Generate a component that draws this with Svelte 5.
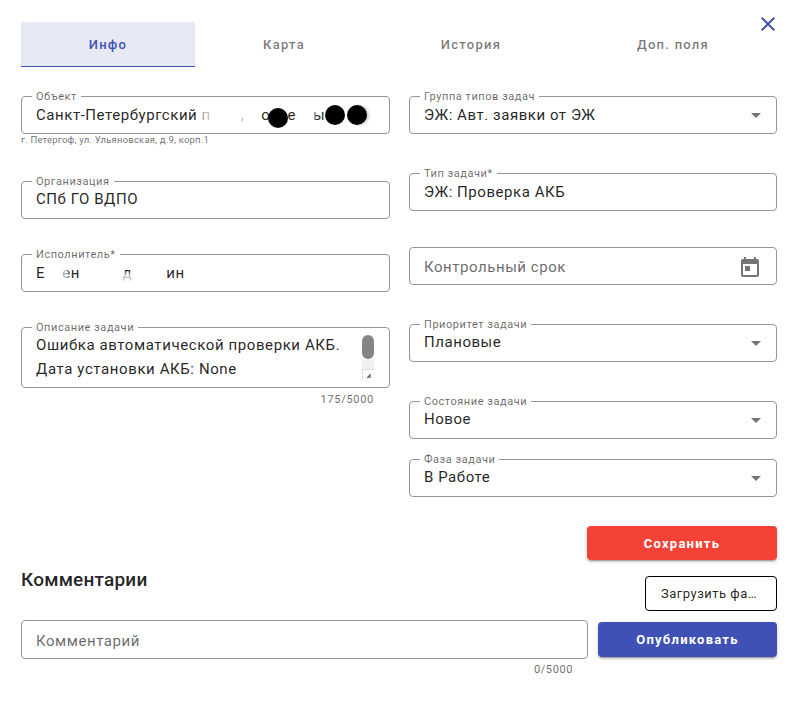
<script>
	const tabs = ['Инфо', 'Карта', 'История', 'Доп. поля'];
	const chevron = 'M7 10l5 5 5-5z';
</script>

{#snippet field(label, value, cls = '', select = false)}
	<div class="field {cls}">
		{#if label}<span class="label">{label}</span>{/if}
		<span class="value">{value}</span>
		{#if select}
			<svg class="chevron" viewBox="0 0 24 24"><path d={chevron} /></svg>
		{/if}
	</div>
{/snippet}

<div class="dialog">
	<button class="close" aria-label="Закрыть">
		<svg viewBox="0 0 24 24"><path d="M19 6.41 17.59 5 12 10.59 6.41 5 5 6.41 10.59 12 5 17.59 6.41 19 12 13.41 17.59 19 19 17.59 13.41 12z" /></svg>
	</button>

	<div class="tabs">
		{#each tabs as tab, i}
			<div class="tab" class:active={i === 0}>{tab}</div>
		{/each}
	</div>

	<div class="columns">
		<div class="col left">
			<div>
				<div class="field low">
					<span class="label">Объект</span>
					<span class="value">Санкт-Петербургский п       ,    о    е    ы</span>
					<i class="smear s1"></i>
					<i class="smear s2"></i>
					<i class="smear s3"></i>
					<i class="dot d1"></i>
					<i class="dot d2"></i>
					<i class="dot d3"></i>
				</div>
				<div class="hint">г. Петергоф, ул. Ульяновская, д.9, корп.1</div>
			</div>
			{@render field('Организация', 'СПб ГО ВДПО')}
			<div class="field low">
				<span class="label">Исполнитель*</span>
				<span class="value">Е    ен          д        ин</span>
				<i class="smear s4"></i>
				<i class="smear s5"></i>
			</div>
			<div>
				<div class="field area">
					<span class="label">Описание задачи</span>
					<div class="area-text">Ошибка автоматической проверки АКБ.<br />Дата установки АКБ: None</div>
					<div class="scroll">
						<div class="thumb"></div>
						<div class="track"></div>
						<div class="resizer">
							<svg viewBox="0 0 10 10"><path d="M7 4 4 7M7 6 6 7" /></svg>
						</div>
					</div>
				</div>
				<div class="count">175/5000</div>
			</div>
		</div>

		<div class="col right">
			{@render field('Группа типов задач', 'ЭЖ: Авт. заявки от ЭЖ', 'low gap39', true)}
			{@render field('Тип задачи*', 'ЭЖ: Проверка АКБ', 'low gap36')}
			<div class="field gap39">
				<span class="value placeholder">Контрольный срок</span>
				<svg class="today" viewBox="0 0 24 24"><path d="M19 3h-1V1h-2v2H8V1H6v2H5c-1.1 0-2 .9-2 2v14c0 1.1.9 2 2 2h14c1.1 0 2-.9 2-2V5c0-1.1-.9-2-2-2zm0 16H5V8h14v11zM7 10h5v5H7z" /></svg>
			</div>
			{@render field('Приоритет задачи', 'Плановые', 'gap39', true)}
			{@render field('Состояние задачи', 'Новое', 'gap20', true)}
			{@render field('Фаза задачи', 'В Работе', '', true)}
			<button class="btn save">Сохранить</button>
		</div>
	</div>

	<div class="comments-head">
		<h2>Комментарии</h2>
		<button class="upload"><span>Загрузить файл</span></button>
	</div>

	<div class="comment-row">
		<div class="comment-col">
			<div class="field tall"><span class="value placeholder">Комментарий</span></div>
			<div class="count small">0/5000</div>
		</div>
		<button class="btn publish">Опубликовать</button>
	</div>
</div>

<style>
	:global(body) {
		background: #fff;
	}

	.dialog {
		position: relative;
		box-sizing: border-box;
		width: 794px;
		height: 715px;
		padding: 22px 17px 0 21px;
		font-family: Roboto, sans-serif;
		color: rgba(0, 0, 0, 0.87);
	}

	.close {
		position: absolute;
		top: 12px;
		right: 14px;
		width: 24px;
		height: 24px;
		padding: 0;
		border: 0;
		background: none;
	}

	.close svg {
		display: block;
		fill: #3f51b5;
	}

	.tabs {
		display: grid;
		grid-template-columns: 174px 178px 196px 208px;
		height: 45px;
	}

	.tab {
		display: flex;
		align-items: center;
		justify-content: center;
		font-size: 13px;
		font-weight: 500;
		letter-spacing: 1.25px;
		color: rgba(0, 0, 0, 0.54);
	}

	.tab.active {
		background: #e7e9f5;
		color: #3f51b5;
		box-shadow: inset 0 -1px 0 #3f51b5;
	}

	.columns {
		display: grid;
		grid-template-columns: 369px 368px;
		column-gap: 19px;
		margin-top: 29px;
	}

	.col {
		display: flex;
		flex-direction: column;
	}

	.col.left {
		gap: 35px;
	}

	.field {
		position: relative;
		box-sizing: border-box;
		display: flex;
		align-items: center;
		height: 38px;
		padding: 0 14px;
		border: 1px solid #969696;
		border-radius: 4px;
		font-size: 15px;
		letter-spacing: 0.55px;
	}

	.field.tall {
		height: 39px;
	}

	.label {
		position: absolute;
		top: -7px;
		left: 10px;
		padding: 0 4px;
		background: #fff;
		font-size: 11px;
		line-height: 13px;
		letter-spacing: 0.55px;
		color: rgba(0, 0, 0, 0.6);
	}

	.value {
		padding-bottom: 2px;
		white-space: pre;
	}

	.low .value {
		padding-bottom: 0;
	}

	.placeholder {
		padding: 2px 0 0;
		color: rgba(0, 0, 0, 0.6);
	}

	.gap39 {
		margin-bottom: 39px;
	}

	.gap36 {
		margin-bottom: 36px;
	}

	.gap20 {
		margin-bottom: 20px;
	}

	.chevron {
		position: absolute;
		top: 6px;
		right: 8px;
		width: 24px;
		height: 24px;
		fill: #757575;
	}

	.today {
		position: absolute;
		top: 8px;
		right: 14px;
		width: 24px;
		height: 24px;
		fill: #757575;
	}

	.hint {
		height: 12px;
		font-size: 9.5px;
		line-height: 12px;
		letter-spacing: 0.2px;
		color: rgba(0, 0, 0, 0.6);
	}

	.area {
		align-items: flex-start;
		height: 61px;
	}

	.area-text {
		margin-top: 5px;
		line-height: 24px;
		letter-spacing: 0.6px;
		white-space: nowrap;
	}

	.scroll {
		position: absolute;
		top: 7px;
		right: 15px;
		display: flex;
		flex-direction: column;
		width: 12px;
	}

	.thumb {
		height: 24px;
		border-radius: 6px;
		background: #858585;
	}

	.track {
		height: 10px;
		background: #f1f1f1;
	}

	.resizer {
		box-sizing: border-box;
		height: 11px;
		border-top: 1px solid #ddd;
		border-left: 1px solid #ddd;
	}

	.resizer svg {
		display: block;
		fill: none;
		stroke: #444;
		stroke-width: 1.2;
	}

	.count {
		padding: 5px 16px 0 0;
		font-size: 11px;
		line-height: 13px;
		letter-spacing: 0.7px;
		text-align: right;
		color: rgba(0, 0, 0, 0.6);
	}

	.count.small {
		padding: 4px 15px 0 0;
		letter-spacing: 0.6px;
	}

	.smear {
		position: absolute;
		background: rgba(255, 255, 255, 0.7);
		filter: blur(1.5px);
	}

	.s1 { left: 180px; top: 8px; width: 16px; height: 20px; }
	.s2 { left: 215px; top: 8px; width: 10px; height: 22px; }
	.s3 { left: 285px; top: 8px; width: 8px; height: 20px; }
	.s4 { left: 40px; top: 8px; width: 6px; height: 20px; }
	.s5 { left: 96px; top: 18px; width: 16px; height: 10px; }

	.dot {
		position: absolute;
		width: 20px;
		height: 20px;
		border-radius: 50%;
		background: #000;
	}

	.d1 { left: 246px; top: 11px; }
	.d2 { left: 303px; top: 8px; }
	.d3 { left: 325px; top: 8px; box-shadow: 2px 0 3px rgba(0, 0, 0, 0.2); }

	.btn {
		height: 35px;
		border: 0;
		border-radius: 4px;
		font-family: inherit;
		font-size: 13px;
		font-weight: 700;
		letter-spacing: 1.25px;
		color: #fff;
		box-shadow: 0 3px 1px -2px rgba(0, 0, 0, 0.2), 0 2px 2px rgba(0, 0, 0, 0.14), 0 1px 5px rgba(0, 0, 0, 0.12);
	}

	.save {
		align-self: flex-end;
		width: 190px;
		height: 34px;
		margin-top: 29px;
		background: #f44336;
	}

	.publish {
		width: 179px;
		margin-top: 2px;
		background: #3f51b5;
	}

	.comments-head {
		display: flex;
		align-items: flex-start;
		justify-content: space-between;
		margin-top: 16px;
	}

	h2 {
		margin: -7px 0 0;
		font-size: 19px;
		line-height: 22px;
		font-weight: 500;
		letter-spacing: 0.2px;
	}

	.upload {
		box-sizing: border-box;
		width: 132px;
		height: 35px;
		padding: 0 15px;
		border: 1px solid #000;
		border-radius: 4px;
		background: #fff;
		font-family: inherit;
		font-size: 13px;
		letter-spacing: 0.5px;
		color: rgba(0, 0, 0, 0.87);
	}

	.upload span {
		display: block;
		overflow: hidden;
		text-overflow: ellipsis;
		white-space: nowrap;
	}

	.comment-row {
		display: flex;
		align-items: flex-start;
		gap: 10px;
		margin-top: 9px;
	}

	.comment-col {
		flex: 1;
	}
</style>
